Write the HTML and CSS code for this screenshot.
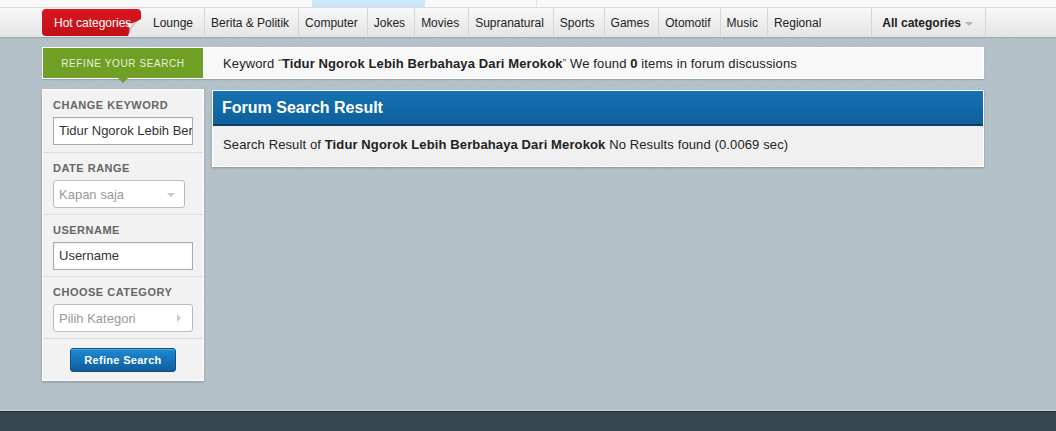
FILE: index.html
```html
<!DOCTYPE html>
<html lang="id">
<head>
<meta charset="utf-8">
<title>Forum Search Result</title>
<link rel="stylesheet" href="styles.css">
</head>
<body>
<div class="page">
  <div class="topstrip">
    <span class="seg seg-a"></span>
    <span class="seg seg-b"></span>
    <span class="seg seg-c"></span>
    <span class="seg seg-d"></span>
  </div>
  <nav class="navbar">
    <a class="hot">
      <svg class="hot-bg" width="99" height="27" viewBox="0 0 99 27" aria-hidden="true">
        <defs>
          <linearGradient id="hr" x1="0" y1="0" x2="0" y2="1">
            <stop offset="0" stop-color="#d9161f"/>
            <stop offset="1" stop-color="#c20f17"/>
          </linearGradient>
          <linearGradient id="hf" x1="0" y1="0" x2="1" y2="1">
            <stop offset="0" stop-color="#f4f4f4"/>
            <stop offset="1" stop-color="#a9a9a9"/>
          </linearGradient>
        </defs>
        <path d="M4 0 H95 Q99 0 99 4 L99 10 Q91 13 86 27 H4 Q0 27 0 23 V4 Q0 0 4 0 Z" fill="url(#hr)"/>
        <path d="M99 10 Q91 13 86 27 Q90 17 83 14 Q93 15 99 10 Z" fill="url(#hf)"/>
      </svg>
      <span class="hot-text">Hot categories</span>
    </a>
    <a class="nav-item first">Lounge</a>
    <a class="nav-item">Berita &amp; Politik</a>
    <a class="nav-item">Computer</a>
    <a class="nav-item">Jokes</a>
    <a class="nav-item">Movies</a>
    <a class="nav-item">Supranatural</a>
    <a class="nav-item">Sports</a>
    <a class="nav-item">Games</a>
    <a class="nav-item">Otomotif</a>
    <a class="nav-item">Music</a>
    <a class="nav-item last">Regional</a>
    <a class="nav-all">All categories <span class="caret-down"></span></a>
  </nav>

  <main class="content">
    <div class="refine-strip">
      <div class="refine-label">REFINE YOUR SEARCH</div>
      <div class="refine-info">Keyword <span class="q">“</span><b>Tidur Ngorok Lebih Berbahaya Dari Merokok</b><span class="q">”</span> We found <b>0</b> items in forum discussions</div>
    </div>

    <div class="columns">
      <aside class="sidebar">
        <div class="sb-section first">
          <div class="sb-label">CHANGE KEYWORD</div>
          <div class="sb-input">Tidur Ngorok Lebih Berbahaya Dari Merokok</div>
        </div>
        <div class="sb-section">
          <div class="sb-label">DATE RANGE</div>
          <div class="sb-select narrow"><span class="ph">Kapan saja</span><span class="tri-down"></span></div>
        </div>
        <div class="sb-section">
          <div class="sb-label">USERNAME</div>
          <div class="sb-input">Username</div>
        </div>
        <div class="sb-section">
          <div class="sb-label">CHOOSE CATEGORY</div>
          <div class="sb-select"><span class="ph">Pilih Kategori</span><span class="tri-right"></span></div>
        </div>
        <div class="sb-actions">
          <button class="btn">Refine Search</button>
        </div>
      </aside>

      <section class="result">
        <h1 class="result-head">Forum Search Result</h1>
        <div class="result-body">Search Result of <b>Tidur Ngorok Lebih Berbahaya Dari Merokok</b> No Results found (0.0069 sec)</div>
      </section>
    </div>
  </main>

  <footer class="footer"></footer>
</div>
</body>
</html>
```

FILE: styles.css
```css
* { box-sizing: border-box; }

html, body {
  margin: 0;
  padding: 0;
}

body {
  font-family: "Liberation Sans", Arial, sans-serif;
  font-size: 13px;
  color: #222;
  background-color: #b4c1c8;
  background-image: repeating-linear-gradient(-45deg, #b6c3ca 0 1px, #b2bfc6 1px 3px);
}

.page {
  min-height: 100vh;
  display: flex;
  flex-direction: column;
}

/* top strip */
.topstrip {
  height: 8px;
  display: flex;
  background: #f9f9f9;
  border-bottom: 1px solid #dcdcdc;
}
.seg { height: 7px; display: block; }
.seg-a { width: 313px; border-right: 1px solid #e2e2e2; }
.seg-b { width: 112px; background: #c9e6fa; border-right: 1px solid #e2e2e2; }
.seg-c { width: 112px; border-right: 1px solid #e2e2e2; }
.seg-d { flex: 1; }

/* nav */
.navbar {
  height: 29px;
  display: flex;
  align-items: stretch;
  padding-left: 42px;
  font-size: 12px;
  background: linear-gradient(#f8f8f8, #e4e4e4);
  box-shadow: 0 1px 1px rgba(0,0,0,0.12);
}
.navbar a {
  display: flex;
  align-items: center;
  color: #222;
  text-decoration: none;
  white-space: nowrap;
}
.hot {
  position: relative;
  width: 99px;
  margin: 1px 0;
  padding-left: 12px;
  color: #fff !important;
}
.hot-bg {
  position: absolute;
  left: 0;
  top: 0;
}
.hot-text { position: relative; }

.nav-item {
  padding: 0 9px 0 6px;
  border-right: 1px solid #d6d6d6;
}
.nav-item.first { padding-left: 12px; padding-right: 11px; }
.nav-item.last { border-right: 0; padding-right: 50px; }
.nav-all {
  font-weight: bold;
  padding: 0 12px 0 10px;
  border-left: 1px solid #d6d6d6;
  border-right: 1px solid #d6d6d6;
}
.caret-down {
  display: inline-block;
  margin-left: 4px;
  margin-top: 2px;
  border-left: 4px solid transparent;
  border-right: 4px solid transparent;
  border-top: 4px solid #b5b5b5;
}

/* content */
.content {
  flex: 1;
  padding: 10px 72px 0 42px;
}

.refine-strip {
  display: flex;
  height: 32px;
  border: 1px solid #fff;
  background: #f8f8f8;
  box-shadow: 0 1px 1px rgba(0,0,0,0.15);
}
.refine-label {
  position: relative;
  width: 160px;
  display: flex;
  align-items: center;
  justify-content: center;
  background: #6f9f25;
  color: #e9f1dc;
  font-size: 10px;
  letter-spacing: 0.6px;
}
.refine-label::after {
  content: "";
  position: absolute;
  left: 75px;
  bottom: -5px;
  border-left: 5px solid transparent;
  border-right: 5px solid transparent;
  border-top: 5px solid #6f9f25;
}
.refine-info {
  display: flex;
  align-items: center;
  padding-left: 20px;
  white-space: pre;
  letter-spacing: 0.12px;
}
.q { font-size: 11px; color: #555; }

.columns {
  display: flex;
  align-items: flex-start;
  gap: 8px;
  margin-top: 10px;
}

/* sidebar */
.sidebar {
  width: 162px;
  flex: none;
  background: #f2f2f2;
  border: 1px solid #fff;
  box-shadow: 0 1px 2px rgba(0,0,0,0.25);
}
.sb-section {
  padding: 8px 10px 6px 10px;
  border-bottom: 1px solid #dcdcdc;
  height: 62px;
}
.sb-section.first { height: 63px; }
.sb-label {
  font-size: 11px;
  line-height: 14px;
  font-weight: bold;
  letter-spacing: 0.5px;
  color: #666;
  margin-bottom: 5px;
}
.sb-input {
  width: 140px;
  height: 28px;
  background: #fff;
  border: 1px solid #aaa;
  box-shadow: inset 0 1px 2px rgba(0,0,0,0.08);
  padding: 0 5px;
  line-height: 26px;
  font-size: 13px;
  color: #333;
  white-space: nowrap;
  overflow: hidden;
}
.sb-select {
  width: 140px;
  height: 28px;
  background: #fff;
  border: 1px solid #bbb;
  border-radius: 3px;
  padding: 0 5px;
  display: flex;
  align-items: center;
  justify-content: space-between;
}
.sb-select.narrow { width: 132px; }
.ph { color: #999; font-size: 13px; }
.tri-down {
  margin-right: 4px;
  margin-top: 2px;
  border-left: 4px solid transparent;
  border-right: 4px solid transparent;
  border-top: 4px solid #c8c8c8;
}
.tri-right {
  margin-right: 6px;
  border-top: 4px solid transparent;
  border-bottom: 4px solid transparent;
  border-left: 4px solid #c8c8c8;
}
.sb-actions {
  padding: 9px 0 8px;
  display: flex;
  justify-content: center;
}
.btn {
  width: 106px;
  height: 24px;
  border: 1px solid #0b4f83;
  border-radius: 3px;
  background: linear-gradient(#1d8ad5, #0f5d9c);
  color: #fff;
  font-family: "Liberation Sans", Arial, sans-serif;
  font-weight: bold;
  font-size: 11px;
  letter-spacing: 0.3px;
  padding: 0;
  box-shadow: inset 0 1px 0 rgba(255,255,255,0.25);
}

/* result */
.result {
  flex: 1;
  margin-top: 1px;
  border: 1px solid #fff;
  background: #f0f0f0;
  box-shadow: 0 1px 2px rgba(0,0,0,0.25);
}
.result-head {
  margin: 0;
  height: 35px;
  padding-left: 9px;
  display: flex;
  align-items: center;
  font-size: 16px;
  font-weight: bold;
  color: #fff;
  background: linear-gradient(#1673b4, #0f5f9b);
  border-bottom: 2px solid #0b3d63;
}
.result-body {
  height: 40px;
  display: flex;
  align-items: center;
  padding: 0 0 3px 10px;
  white-space: pre;
  letter-spacing: 0.12px;
}

/* footer */
.footer {
  height: 20px;
  background: #37474f;
  border-top: 1px solid #26323a;
  box-shadow: 0 -1px 0 #c9d2d6;
}
```
